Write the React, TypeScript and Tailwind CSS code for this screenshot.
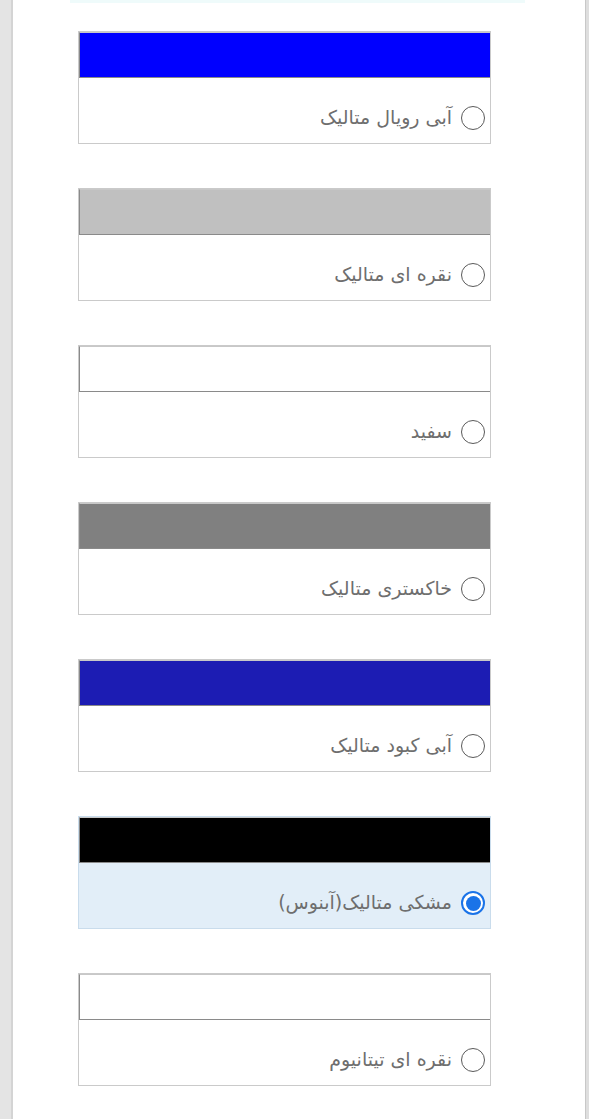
import { useState } from "react";

type Swatch = {
  id: string;
  label: string;
  bar: string;
};

const swatches: Swatch[] = [
  { id: "royal", label: "آبی رویال متالیک", bar: "bg-[#0000ff]" },
  { id: "silver", label: "نقره ای متالیک", bar: "bg-[#c0c0c0]" },
  { id: "white", label: "سفید", bar: "bg-white" },
  { id: "grey", label: "خاکستری متالیک", bar: "bg-[#808080]" },
  { id: "navy", label: "آبی کبود متالیک", bar: "bg-[#1c1cb3]" },
  { id: "ebony", label: "مشکی متالیک(آبنوس)", bar: "bg-black" },
  { id: "titanium", label: "نقره ای تیتانیوم", bar: "bg-white" },
];

export default function App() {
  const [selected, setSelected] = useState("ebony");

  return (
    <div className="flex h-[1119px] w-[589px] overflow-hidden bg-white font-['DejaVu_Sans',sans-serif]">
      <div className="w-[13px] shrink-0 border-r-2 border-[#d4d4d4] bg-[#e4e4e4]" />

      <div className="flex flex-1 flex-col">
        <div className="ml-[57px] h-[3px] w-[455px] bg-[#effbfb]" />

        <div className="flex flex-col gap-[44px] pl-[65px] pt-[28px]">
          {swatches.map((s) => (
            <SwatchOption
              key={s.id}
              swatch={s}
              checked={selected === s.id}
              onSelect={() => setSelected(s.id)}
            />
          ))}
        </div>
      </div>

      <div className="w-[4px] shrink-0 border-l border-[#c8c8c8] bg-[#dedede]" />
    </div>
  );
}

function SwatchOption({
  swatch,
  checked,
  onSelect,
}: {
  swatch: Swatch;
  checked: boolean;
  onSelect: () => void;
}) {
  return (
    <label
      className={`flex w-[413px] cursor-pointer flex-col border ${
        checked ? "border-[#c9dcec]" : "border-[#cacaca]"
      }`}
    >
      <div
        className={`h-[46px] border-t border-l border-t-[#c8c8c8] border-l-[#8a8a8a] border-b border-b-[#8a8a8a] ${swatch.bar}`}
      />
      <div
        dir="rtl"
        className={`flex h-[65px] items-end gap-[9px] pb-[13px] pr-[5px] ${
          checked ? "bg-[#e2eef8]" : "bg-white"
        }`}
        onClick={onSelect}
      >
        <Radio checked={checked} />
        <span className="pb-[1px] text-[19px] leading-[24px] text-[#6e6e6e]">
          {swatch.label}
        </span>
      </div>
    </label>
  );
}

function Radio({ checked }: { checked: boolean }) {
  if (checked) {
    return (
      <span className="flex h-[24px] w-[24px] shrink-0 items-center justify-center rounded-full border-2 border-[#1a73e8] bg-white">
        <span className="h-[15px] w-[15px] rounded-full bg-[#1a73e8]" />
      </span>
    );
  }
  return (
    <span className="h-[24px] w-[24px] shrink-0 rounded-full border-[1.5px] border-[#5a5a5a] bg-white" />
  );
}
